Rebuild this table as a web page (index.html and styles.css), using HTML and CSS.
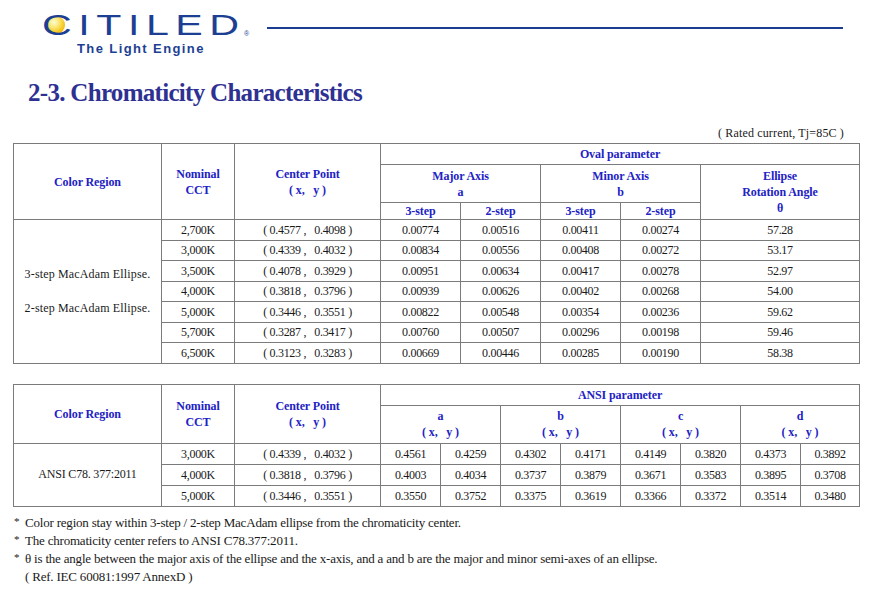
FILE: index.html
```html
<!DOCTYPE html>
<html>
<head>
<meta charset="utf-8">
<link rel="stylesheet" href="styles.css">
</head>
<body>
<header class="top">
  <div class="logo">
    <span class="sun"></span>
    <span class="brand">CITILE<span class="last">D</span></span>
    <span class="reg">®</span>
    <div class="tagline">The Light Engine</div>
  </div>
  <div class="rule"></div>
</header>

<h1 class="title">2-3. Chromaticity Characteristics</h1>
<p class="cond">( Rated current, Tj=85C )</p>

<table class="grid t1">
  <colgroup>
    <col class="c-region"><col class="c-cct"><col class="c-center">
    <col class="c-80"><col class="c-80"><col class="c-80"><col class="c-80">
    <col class="c-angle">
  </colgroup>
  <tr class="h-top">
    <th rowspan="3">Color Region</th>
    <th rowspan="3">Nominal<br>CCT</th>
    <th rowspan="3">Center Point<br>( x,&nbsp;&nbsp; y )</th>
    <th colspan="5">Oval parameter</th>
  </tr>
  <tr class="h-mid">
    <th colspan="2">Major Axis<br>a</th>
    <th colspan="2">Minor Axis<br>b</th>
    <th rowspan="2">Ellipse<br>Rotation Angle<br>θ</th>
  </tr>
  <tr class="h-step">
    <th>3-step</th><th>2-step</th><th>3-step</th><th>2-step</th>
  </tr>
  <tr class="d1">
    <td rowspan="7" class="label wide">3-step MacAdam Ellipse.<br><br>2-step MacAdam Ellipse.</td>
    <td>2,700K</td><td>( 0.4577 ,&nbsp;&nbsp; 0.4098 )</td>
    <td>0.00774</td><td>0.00516</td><td>0.00411</td><td>0.00274</td><td>57.28</td>
  </tr>
  <tr class="d1">
    <td>3,000K</td><td>( 0.4339 ,&nbsp;&nbsp; 0.4032 )</td>
    <td>0.00834</td><td>0.00556</td><td>0.00408</td><td>0.00272</td><td>53.17</td>
  </tr>
  <tr class="d1">
    <td>3,500K</td><td>( 0.4078 ,&nbsp;&nbsp; 0.3929 )</td>
    <td>0.00951</td><td>0.00634</td><td>0.00417</td><td>0.00278</td><td>52.97</td>
  </tr>
  <tr class="d1">
    <td>4,000K</td><td>( 0.3818 ,&nbsp;&nbsp; 0.3796 )</td>
    <td>0.00939</td><td>0.00626</td><td>0.00402</td><td>0.00268</td><td>54.00</td>
  </tr>
  <tr class="d1">
    <td>5,000K</td><td>( 0.3446 ,&nbsp;&nbsp; 0.3551 )</td>
    <td>0.00822</td><td>0.00548</td><td>0.00354</td><td>0.00236</td><td>59.62</td>
  </tr>
  <tr class="d1">
    <td>5,700K</td><td>( 0.3287 ,&nbsp;&nbsp; 0.3417 )</td>
    <td>0.00760</td><td>0.00507</td><td>0.00296</td><td>0.00198</td><td>59.46</td>
  </tr>
  <tr class="d1">
    <td>6,500K</td><td>( 0.3123 ,&nbsp;&nbsp; 0.3283 )</td>
    <td>0.00669</td><td>0.00446</td><td>0.00285</td><td>0.00190</td><td>58.38</td>
  </tr>
</table>

<table class="grid t2">
  <colgroup>
    <col class="c-region"><col class="c-cct"><col class="c-center">
    <col class="c-60"><col class="c-60"><col class="c-60"><col class="c-60">
    <col class="c-60"><col class="c-60"><col class="c-60"><col class="c-59">
  </colgroup>
  <tr class="h-top2">
    <th rowspan="2">Color Region</th>
    <th rowspan="2">Nominal<br>CCT</th>
    <th rowspan="2">Center Point<br>( x,&nbsp;&nbsp; y )</th>
    <th colspan="8">ANSI parameter</th>
  </tr>
  <tr class="h-mid2">
    <th colspan="2">a<br>( x,&nbsp;&nbsp; y )</th>
    <th colspan="2">b<br>( x,&nbsp;&nbsp; y )</th>
    <th colspan="2">c<br>( x,&nbsp;&nbsp; y )</th>
    <th colspan="2">d<br>( x,&nbsp;&nbsp; y )</th>
  </tr>
  <tr class="d2">
    <td rowspan="3" class="label">ANSI C78. 377:2011</td>
    <td>3,000K</td><td>( 0.4339 ,&nbsp;&nbsp; 0.4032 )</td>
    <td>0.4561</td><td>0.4259</td><td>0.4302</td><td>0.4171</td>
    <td>0.4149</td><td>0.3820</td><td>0.4373</td><td>0.3892</td>
  </tr>
  <tr class="d2">
    <td>4,000K</td><td>( 0.3818 ,&nbsp;&nbsp; 0.3796 )</td>
    <td>0.4003</td><td>0.4034</td><td>0.3737</td><td>0.3879</td>
    <td>0.3671</td><td>0.3583</td><td>0.3895</td><td>0.3708</td>
  </tr>
  <tr class="d2">
    <td>5,000K</td><td>( 0.3446 ,&nbsp;&nbsp; 0.3551 )</td>
    <td>0.3550</td><td>0.3752</td><td>0.3375</td><td>0.3619</td>
    <td>0.3366</td><td>0.3372</td><td>0.3514</td><td>0.3480</td>
  </tr>
</table>

<ul class="notes">
  <li><span class="star">*</span><span>Color region stay within 3-step / 2-step MacAdam ellipse from the chromaticity center.</span></li>
  <li><span class="star">*</span><span>The chromaticity center refers to ANSI C78.377:2011.</span></li>
  <li><span class="star">*</span><span>θ is the angle between the major axis of the ellipse and the x-axis, and a and b are the major and minor semi-axes of an ellipse.<br><span class="ref">( Ref. IEC 60081:1997 AnnexD )</span></span></li>
</ul>
</body>
</html>
```

FILE: styles.css
```css
html, body {
  margin: 0;
  padding: 0;
  background: #ffffff;
}

body {
  font-family: "Liberation Serif", "Times New Roman", serif;
  color: #1a1a1a;
}

/* ---------- header ---------- */
.top {
  display: flex;
  align-items: flex-start;
  padding: 11px 34px 0 42px;
}

.logo {
  position: relative;
  width: 225px;
  flex: none;
}

.brand {
  position: relative;
  z-index: 1;
  display: block;
  width: 140px;
  height: 29px;
  font-family: "Liberation Sans", Arial, sans-serif;
  font-size: 29px;
  line-height: 29px;
  letter-spacing: 4.6px;
  color: #1d3f93;
  transform: scaleX(1.42);
  transform-origin: left center;
  white-space: nowrap;
}

.brand .last {
  letter-spacing: 0;
}

.sun {
  position: absolute;
  z-index: 0;
  left: 6px;
  top: 5px;
  width: 17px;
  height: 18px;
  border-radius: 50%;
  background: radial-gradient(circle at 35% 35%, #fffbd6 0%, #fce97a 30%, #f4c51c 65%, #e0a40a 100%);
}

.reg {
  position: absolute;
  left: 202px;
  top: 19px;
  font-family: "Liberation Sans", Arial, sans-serif;
  font-size: 7px;
  line-height: 7px;
  color: #1d3f93;
}

.tagline {
  margin: 2px 0 0 35px;
  font-family: "Liberation Sans", Arial, sans-serif;
  font-weight: bold;
  font-size: 13px;
  line-height: 13px;
  letter-spacing: 1.4px;
  color: #1d3f93;
  white-space: nowrap;
}

.rule {
  flex: 1;
  height: 2px;
  margin-top: 16px;
  background: #1b3d8f;
}

/* ---------- title ---------- */
.title {
  margin: 23px 0 0 28px;
  font-family: "Liberation Serif", "Times New Roman", serif;
  font-weight: bold;
  font-size: 25px;
  line-height: 30px;
  letter-spacing: -0.7px;
  color: #2e3192;
}

.cond {
  margin: 18px 0 0 0;
  padding-right: 33px;
  text-align: right;
  font-size: 12px;
  line-height: 14px;
  letter-spacing: 0.15px;
}

/* ---------- tables ---------- */
.grid {
  border-collapse: collapse;
  table-layout: fixed;
  width: 847px;
  margin-left: 13px;
  font-family: "Liberation Serif", "Times New Roman", serif;
  font-size: 12px;
  color: #1a1a1a;
}

.t1 {
  margin-top: 3px;
}

.t2 {
  margin-top: 20px;
}

.grid th,
.grid td {
  border: 1px solid #7b7b7b;
  padding: 0;
  text-align: center;
  vertical-align: middle;
  line-height: 16px;
  white-space: nowrap;
  letter-spacing: -0.3px;
}

.grid th {
  font-weight: bold;
  color: #2222c4;
  letter-spacing: -0.1px;
}

.grid td.label {
  line-height: 17px;
  letter-spacing: -0.2px;
}

.grid td.wide {
  letter-spacing: 0.15px;
}

.c-region { width: 148px; }
.c-cct { width: 73px; }
.c-center { width: 146px; }
.c-80 { width: 80px; }
.c-angle { width: 159px; }
.c-60 { width: 60px; }
.c-59 { width: 59px; }

.h-top { height: 21px; }
.h-mid { height: 38px; }
.h-step { height: 16px; }
.d1 { height: 20.5px; }

.h-top2 { height: 21px; }
.h-mid2 { height: 38px; }
.d2 { height: 21px; }

/* ---------- notes ---------- */
.notes {
  list-style: none;
  margin: 7px 0 0 14px;
  padding: 0;
  font-size: 13px;
  line-height: 18px;
  letter-spacing: -0.2px;
}

.notes li {
  display: flex;
}

.star {
  flex: none;
  width: 11px;
  font-size: 11px;
  line-height: 14px;
}

.ref {
  display: inline-block;
  line-height: 17px;
}
```
